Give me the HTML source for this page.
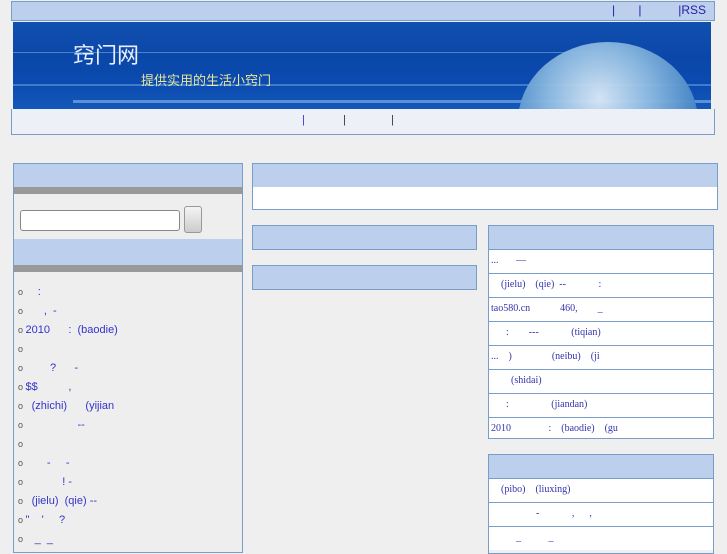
<!DOCTYPE html>
<html><head><meta charset="utf-8"><style>
*{margin:0;padding:0;box-sizing:border-box}
body{width:727px;height:545px;overflow:hidden;background:#efefef;font-family:"Liberation Sans","Noto Sans CJK SC",sans-serif;font-size:11px;color:#33c;position:relative}
.a{position:absolute}
.top{left:11px;top:1px;width:704px;height:20px;background:#bccfec;border:1px solid #7a9cc8;text-align:right;padding-right:8px;line-height:16px;font-size:12px;color:#22a}
.ban{left:13px;top:22px;width:698px;height:87px;background:linear-gradient(180deg,#1250b0 0%,#0a47a8 40%,#0b4ab0 70%,#1458b8 100%);overflow:hidden}
.nav{left:11px;top:109px;width:704px;height:26px;background:#eef0f8;border:1px solid #7a9cc8;border-top:none}
.hd{background:#bccfec}
.box{border:1px solid #7a9cc8}
.row{height:24px;border-top:1px solid #7a9cc8;background:#fff;font-family:"Liberation Serif","Noto Serif CJK SC",serif;font-size:10px;color:#33a;line-height:22px;padding-left:2px;white-space:pre}
ul{list-style:none}
li{height:19px;line-height:19px;padding-left:4px;white-space:pre}
li:before{content:"o ";color:#555;font-size:9px}
</style></head><body>
<div class="a top">|&nbsp;&nbsp;&nbsp;&nbsp;&nbsp;&nbsp;&nbsp;|&nbsp;&nbsp;&nbsp;&nbsp;&nbsp;&nbsp;&nbsp;&nbsp;&nbsp;&nbsp;&nbsp;|RSS</div>
<div class="a ban">
<div class="a" style="left:0;top:30px;width:600px;height:1px;background:#4a82cc"></div>
<div class="a" style="left:0;top:62px;width:698px;height:2px;background:#3e7ccc"></div>
<div class="a" style="left:60px;top:78px;width:640px;height:3px;background:#5a90d8"></div>
<div class="a" style="left:505px;top:20px;width:180px;height:160px;border-radius:50%;background:radial-gradient(circle at 45% 35%,#dceaf6,#8fbce2 35%,#3a7cc0 75%);opacity:.95"></div>
<div class="a" style="left:60px;top:16px;font-size:22px;color:#e8f0ff">窍门网</div>
<div class="a" style="left:128px;top:48px;font-size:13px;color:#e8e89a">提供实用的生活小窍门</div>
</div>
<div class="a nav"><span class="a" style="left:290px;top:5px;color:#33c">|</span><span class="a" style="left:331px;top:5px;color:#333">|</span><span class="a" style="left:379px;top:5px;color:#333">|</span></div>

<div class="a box" style="left:13px;top:163px;width:230px;height:390px;background:#eeeeee">
<div class="hd" style="height:23px"></div>
<div style="height:7px;background:#999"></div>
<div style="height:45px;position:relative">
<div class="a" style="left:6px;top:16px;width:160px;height:21px;background:#fff;border:1px solid #888;border-radius:3px"></div>
<div class="a" style="left:170px;top:12px;width:18px;height:27px;background:linear-gradient(#f4f4f4,#ccc);border:1px solid #999;border-radius:3px"></div>
</div>
<div class="hd" style="height:26px"></div>
<div style="height:7px;background:#999"></div>
<ul style="margin-top:11px">
<li>    :</li><li>      ,  -</li><li>2010      :  (baodie)</li><li></li><li>        ?      -</li><li>$$          ,</li><li>  (zhichi)      (yijian</li><li>                 --</li><li></li><li>       -     -</li><li>            ! -</li><li>  (jielu)  (qie) --</li><li>"    '     ?</li><li>   _  _</li>
</ul></div>

<div class="a box" style="left:252px;top:163px;width:466px;height:47px;background:#fff"><div class="hd" style="height:23px"></div></div>
<div class="a box hd" style="left:252px;top:225px;width:225px;height:25px"></div>
<div class="a box hd" style="left:252px;top:265px;width:225px;height:25px"></div>

<div class="a box" style="left:488px;top:225px;width:226px;height:214px;overflow:hidden">
<div class="hd" style="height:23px"></div>
<div class="row">...       —</div><div class="row">    (jielu)    (qie)  --             :</div><div class="row">tao580.cn            460,        _</div><div class="row">      :        ---             (tiqian)</div><div class="row">...    )                (neibu)    (ji</div><div class="row">        (shidai)</div><div class="row">      :                 (jiandan)</div><div class="row">2010               :    (baodie)    (gu</div>
</div>
<div class="a box" style="left:488px;top:454px;width:226px;height:100px">
<div class="hd" style="height:23px"></div>
<div class="row">    (pibo)    (liuxing)</div><div class="row">                  -             ,      ,</div><div class="row">          _           _</div>
</div>
</body></html>
